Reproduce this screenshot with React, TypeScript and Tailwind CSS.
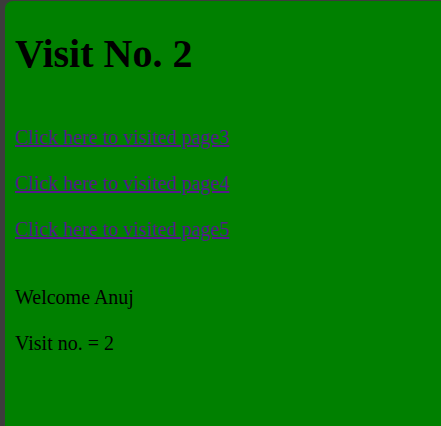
export default function App() {
  return (
    <div className="h-screen w-full bg-[#3c3c3c] pt-[1px] pl-[5px] flex flex-col">
      <div
        className="flex-1 bg-[#008000] rounded-tl-[8px] pl-[10px] text-black"
        style={{ fontFamily: '"Liberation Serif", "Times New Roman", serif' }}
      >
        <h1 className="text-[40px] font-bold leading-[44px] mt-[31px]">Visit No. 2</h1>
        <div className="mt-[50px] flex flex-col gap-[23px] text-[20px] leading-[23px]">
          <div>
            <a href="#" className="text-[#551a8b] underline">Click here to visited page3</a>
          </div>
          <div>
            <a href="#" className="text-[#551a8b] underline">Click here to visited page4</a>
          </div>
          <div>
            <a href="#" className="text-[#551a8b] underline">Click here to visited page5</a>
          </div>
        </div>
        <div className="mt-[45px] flex flex-col gap-[23px] text-[20px] leading-[23px]">
          <div>Welcome Anuj</div>
          <div>Visit no. = 2</div>
        </div>
      </div>
    </div>
  );
}
